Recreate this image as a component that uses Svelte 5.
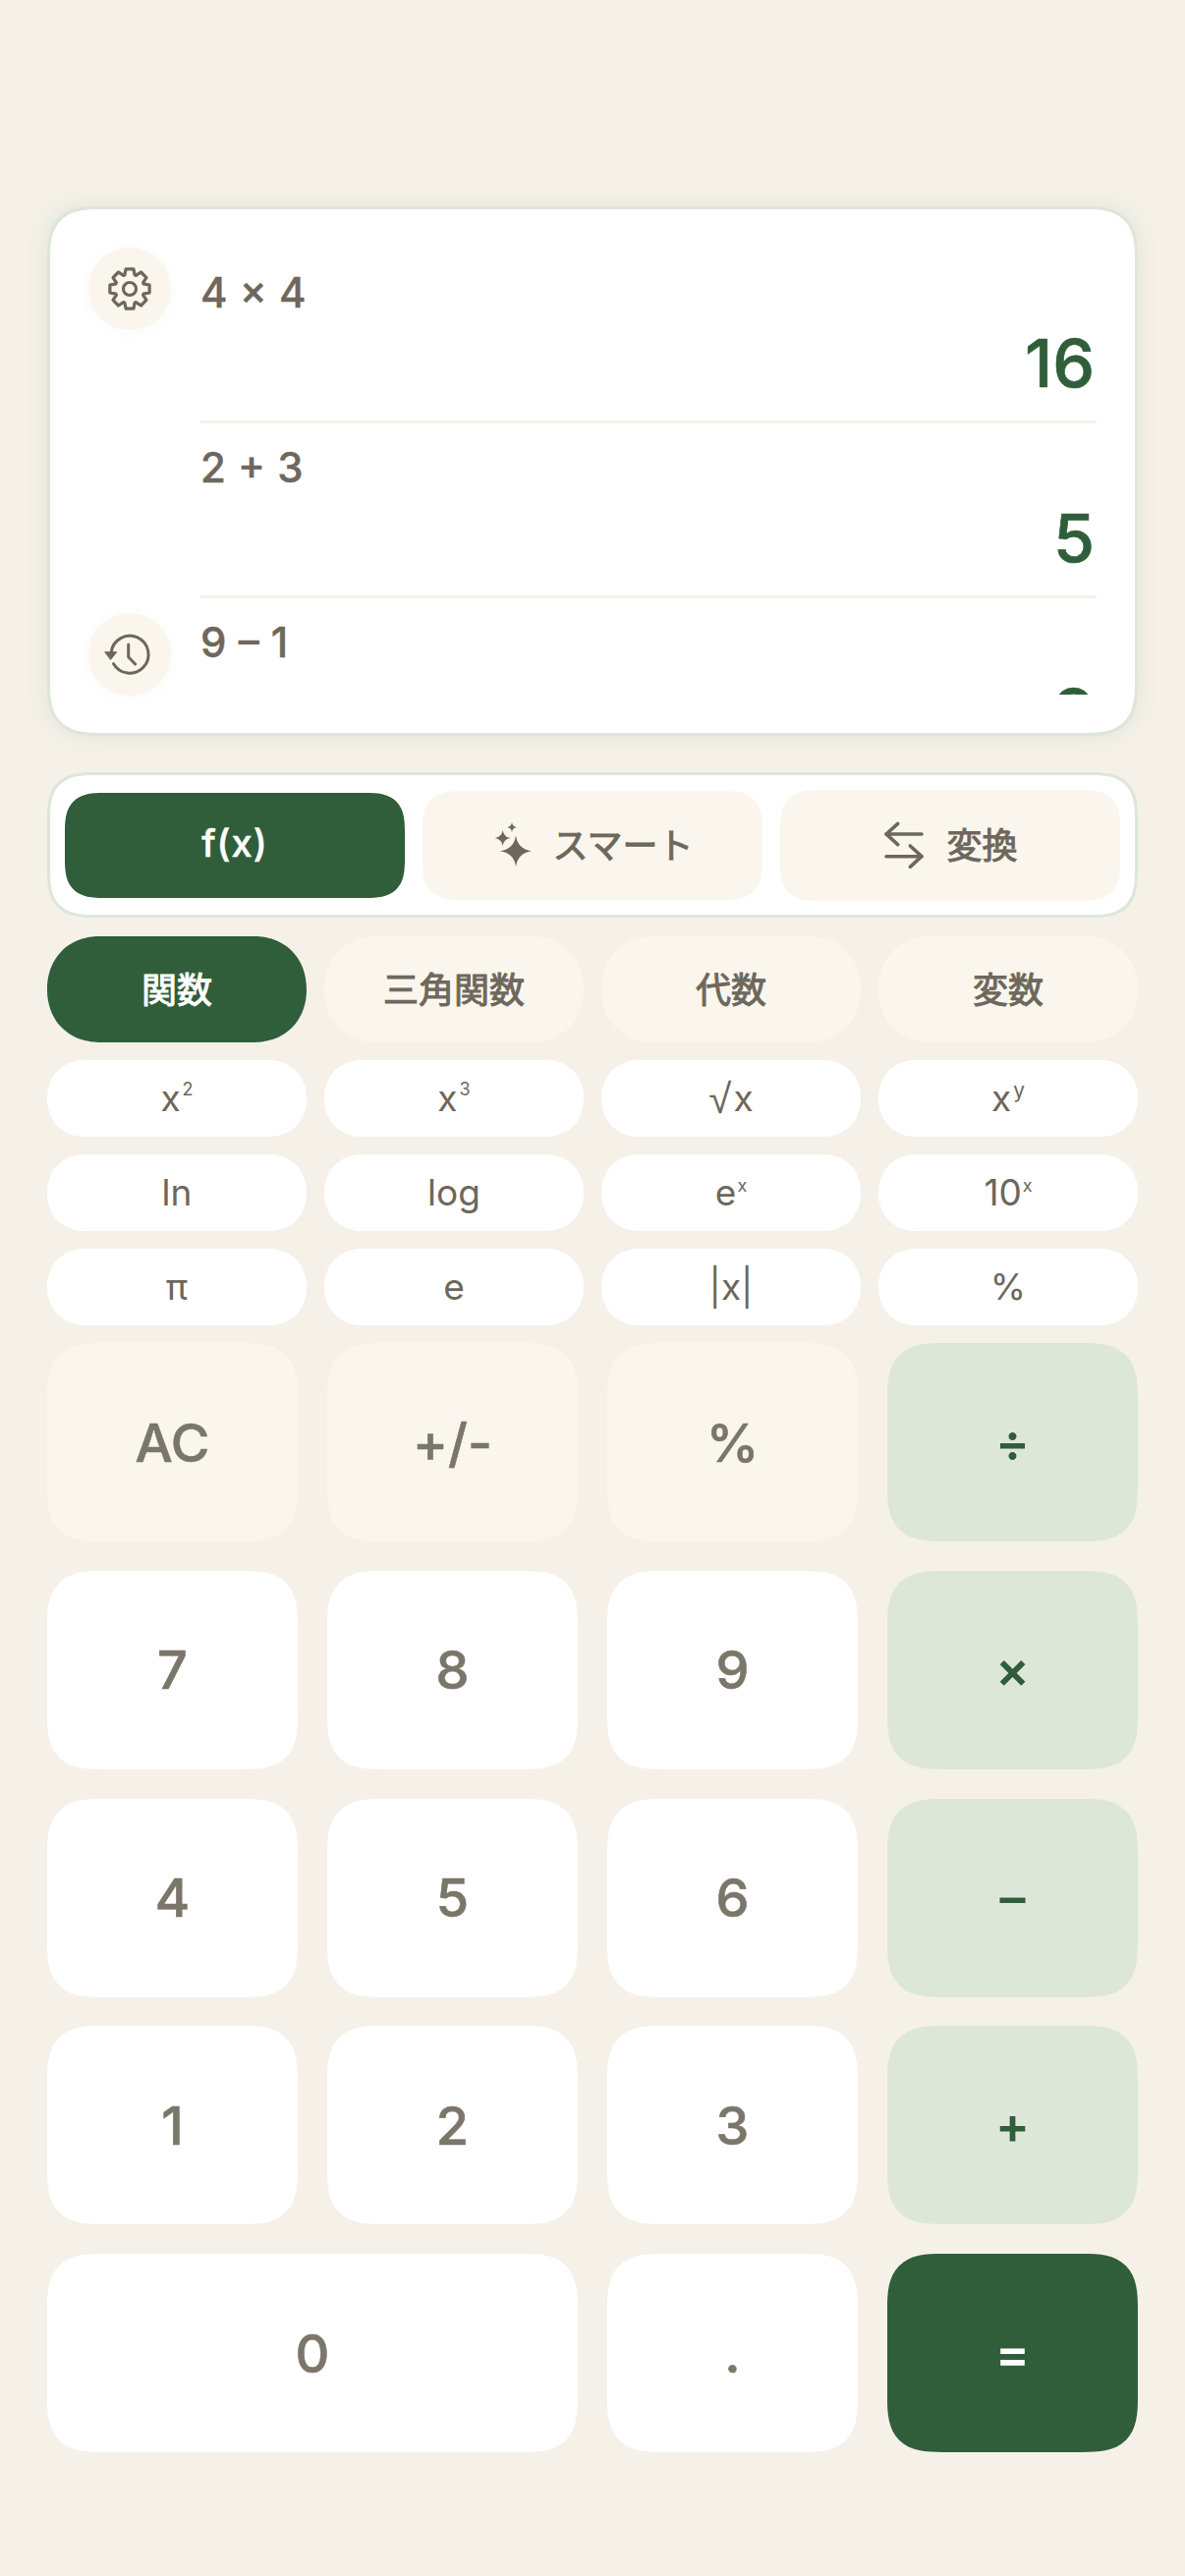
<script>
  const fns = [
    [['x', '2'], ['x', '3'], ['√', 'x', 'root'], ['x', 'y']],
    [['ln'], ['log'], ['e', 'x'], ['10', 'x']],
    [['π'], ['e'], ['|x|'], ['%']]
  ];
  const keys = [
    { t: 'AC', c: 'soft' }, { t: '+/-', c: 'soft' }, { t: '%', c: 'soft' }, { t: '÷', c: 'op' },
    { t: '7' }, { t: '8' }, { t: '9' }, { t: '×', c: 'op' },
    { t: '4' }, { t: '5' }, { t: '6' }, { t: '–', c: 'op' },
    { t: '1' }, { t: '2' }, { t: '3' }, { t: '+', c: 'op' },
    { t: '0', c: 'wide' }, { t: '.' }, { t: '=', c: 'eq' }
  ];
  const history = [['4 × 4', '16'], ['2 + 3', '5'], ['9 – 1', '8']];

  const polar = (r, deg) => {
    const a = ((deg - 90) * Math.PI) / 180;
    return `${(24 + r * Math.cos(a)).toFixed(2)} ${(24 + r * Math.sin(a)).toFixed(2)}`;
  };
  const gear = Array.from({ length: 8 }, (_, i) => {
    const c = i * 45;
    return `${i ? 'L' : 'M'}${polar(15, c - 20)} L${polar(20.5, c - 11)} L${polar(20.5, c + 11)} L${polar(15, c + 20)}`;
  }).join(' ') + ' Z';

  const star = (cx, cy, r) => {
    const k = r * 0.12;
    return `M${cx} ${cy - r}Q${cx + k} ${cy - k} ${cx + r} ${cy}Q${cx + k} ${cy + k} ${cx} ${cy + r}Q${cx - k} ${cy + k} ${cx - r} ${cy}Q${cx - k} ${cy - k} ${cx} ${cy - r}Z`;
  };
</script>

<main class="page">
  <section class="display">
    <div class="side">
      <button class="round" aria-label="設定">
        <svg viewBox="0 0 48 48" width="48" height="48" fill="none" stroke="currentColor" stroke-width="3.200" stroke-linecap="round" stroke-linejoin="round">
          <path d={gear}/>
          <circle cx="24" cy="24" r="6.500"/>
        </svg>
      </button>
      <button class="round" aria-label="履歴">
        <svg viewBox="0 0 48 48" width="48" height="48" fill="none" stroke="currentColor" stroke-width="3" stroke-linecap="round" stroke-linejoin="round">
          <path d="M5.200 22A19 19 0 1 1 7.500 33.500"/>
          <path d="M-1 21.700H10.700L4.700 29.300Z" fill="currentColor" stroke-width="1"/>
          <path d="M22.700 14V26.700L29.700 34"/>
        </svg>
      </button>
    </div>
    <div class="log">
      {#each history as [expr, res]}
        <div class="entry">
          <div class="expr">{expr}</div>
          <div class="res">{res}</div>
        </div>
      {/each}
    </div>
  </section>

  <nav class="tabs">
    <button class="tab on"><span class="tab-label fx">f(x)</span></button>
    <button class="tab mid">
      <svg viewBox="0 0 44 50" width="44" height="50" fill="currentColor">
        <path d={star(24, 31.3, 16)}/>
        <path d={star(10.7, 18, 8)}/>
        <path d={star(20, 7, 5)}/>
      </svg>
      <span class="tab-label">スマート</span>
    </button>
    <button class="tab big">
      <svg viewBox="0 0 44 50" width="44" height="50" fill="none" stroke="currentColor" stroke-width="3.600" stroke-linecap="round" stroke-linejoin="round">
        <path d="M40 14H4"/>
        <path d="M15.700 3.300 4 14 15.700 24.700"/>
        <path d="M4 36.700H40"/>
        <path d="M28.300 26 40 36.700 28.300 47.400"/>
      </svg>
      <span class="tab-label">変換</span>
    </button>
  </nav>

  <div class="cats">
    <button class="cat on">関数</button>
    <button class="cat">三角関数</button>
    <button class="cat">代数</button>
    <button class="cat">変数</button>
  </div>

  <div class="fns">
    {#each fns as row}
      {#each row as [a, b, kind]}
        <button class="fn">
          {#if kind === 'root'}<span class="radical">{a}</span><span class="radicand">{b}</span>
          {:else}{a}{#if b}<sup class:tiny={b === 'x'} class:big={b === 'y'}>{b}</sup>{/if}{/if}
        </button>
      {/each}
    {/each}
  </div>

  <div class="pad">
    {#each keys as k}
      <button class="key {k.c ?? ''}">{k.t}</button>
    {/each}
  </div>
</main>

<style>
  :global(body) {
    margin: 0;
    background: #f5f1e9;
  }
  button {
    border: 0;
    padding: 0;
    font: inherit;
    color: inherit;
    cursor: pointer;
  }
  svg {
    overflow: visible;
    flex: none;
  }
  .page {
    box-sizing: border-box;
    width: 1206px;
    height: 2622px;
    padding: 210px 48px 0;
    display: flex;
    flex-direction: column;
    font-family: Inter, "Noto Sans CJK JP", sans-serif;
    color: #6e675b;
    background: #f5f1e9;
    overflow: hidden;
  }
  .display {
    box-sizing: border-box;
    height: 539px;
    display: flex;
    gap: 30px;
    padding: 40px 39px 39px 39px;
    background: #fff;
    border: 3px solid #dce7da;
    border-radius: 54px;
    corner-shape: superellipse(1.5);
    box-shadow: 0 0 26px rgba(48, 94, 58, 0.09);
  }
  .side {
    width: 84px;
    flex: none;
    margin: -1px 0;
    display: flex;
    flex-direction: column;
    justify-content: space-between;
  }
  .round {
    width: 84px;
    height: 84px;
    flex: none;
    display: flex;
    align-items: center;
    justify-content: center;
    border-radius: 50%;
    background: #faf6ee;
    box-shadow: 0 2px 14px rgba(120, 90, 40, 0.04);
  }
  .log {
    flex: 1;
    min-width: 0;
    overflow: hidden;
  }
  .entry {
    box-sizing: border-box;
    height: 178px;
    border-bottom: 3px solid #f5f1e9;
  }
  .expr {
    font-size: 42px;
    font-weight: 500;
    -webkit-text-stroke: 0.4px currentColor;
    line-height: 50px;
    word-spacing: 1px;
    padding-top: 20px;
  }
  .res {
    text-align: right;
    font-size: 68px;
    font-weight: 500;
    -webkit-text-stroke: 0.7px currentColor;
    line-height: 80px;
    color: #305e3a;
    padding-right: 2px;
    margin-top: 6px;
  }
  .tabs {
    box-sizing: border-box;
    height: 148px;
    margin-top: 37px;
    display: flex;
    align-items: center;
    gap: 18px;
    padding: 0 15px;
    background: #fff;
    border: 3px solid #dce7da;
    border-radius: 48px;
    corner-shape: superellipse(1.5);
  }
  .tab {
    flex: 1;
    height: 111px;
    display: flex;
    align-items: center;
    justify-content: center;
    gap: 18px;
    background: #faf6ee;
    border-radius: 40px;
    corner-shape: superellipse(1.5);
  }
  .tab.on {
    height: 107px;
    background: #305e3a;
    color: #fff;
  }
  .tab.big {
    height: 113px;
    gap: 21px;
  }
  .tab-label {
    font-size: 36px;
    font-weight: 400;
    -webkit-text-stroke: 1px currentColor;
    padding-bottom: 4px;
  }
  .fx {
    font-size: 38px;
    font-weight: 500;
    -webkit-text-stroke: 0.5px currentColor;
    letter-spacing: 1px;
  }
  .cats {
    margin-top: 19px;
    display: grid;
    grid-template-columns: repeat(4, 1fr);
    gap: 18px;
  }
  .cat {
    height: 108px;
    box-sizing: border-box;
    padding-bottom: 5px;
    background: #faf6ee;
    border-radius: 54px;
    corner-shape: superellipse(1.1);
    font-size: 36px;
    font-weight: 400;
    -webkit-text-stroke: 1px currentColor;
  }
  .cat.on {
    background: #305e3a;
    color: #fff;
  }
  .fns {
    margin-top: 18px;
    display: grid;
    grid-template-columns: repeat(4, 1fr);
    gap: 18px;
  }
  .fn {
    height: 78px;
    background: #fff;
    border-radius: 39px;
    corner-shape: superellipse(1.1);
    font-size: 37px;
    font-weight: 400;
    line-height: 78px;
  }
  .fn sup {
    font-size: 18px;
    line-height: 0;
    vertical-align: 16px;
    margin-left: 2px;
  }
  .fn sup.tiny {
    vertical-align: 14px;
    margin-left: 1px;
  }
  .fn sup.big {
    font-size: 21px;
    vertical-align: 14px;
  }
  .radical {
    font-family: "DejaVu Sans", sans-serif;
    font-size: 42px;
    font-weight: 200;
    line-height: 0;
    vertical-align: -2px;
    margin-right: 2px;
  }
  .pad {
    margin-top: 18px;
    display: grid;
    grid-template-columns: repeat(4, 255px);
    grid-auto-rows: 202px;
    gap: 29.75px 30px;
  }
  .key {
    background: #fff;
    border-radius: 56px;
    corner-shape: superellipse(1.5);
    font-size: 54px;
    font-weight: 500;
    -webkit-text-stroke: 0.6px currentColor;
    color: #7b766a;
  }
  .key.soft {
    background: #faf6ee;
  }
  .key.op {
    background: #dce7da;
    color: #305e3a;
    font-size: 52px;
    font-weight: 600;
    -webkit-text-stroke: 0;
  }
  .key.eq {
    background: #305e3a;
    color: #fff;
    font-size: 52px;
    font-weight: 600;
    -webkit-text-stroke: 0;
  }
  .key.wide {
    grid-column: span 2;
  }
</style>
